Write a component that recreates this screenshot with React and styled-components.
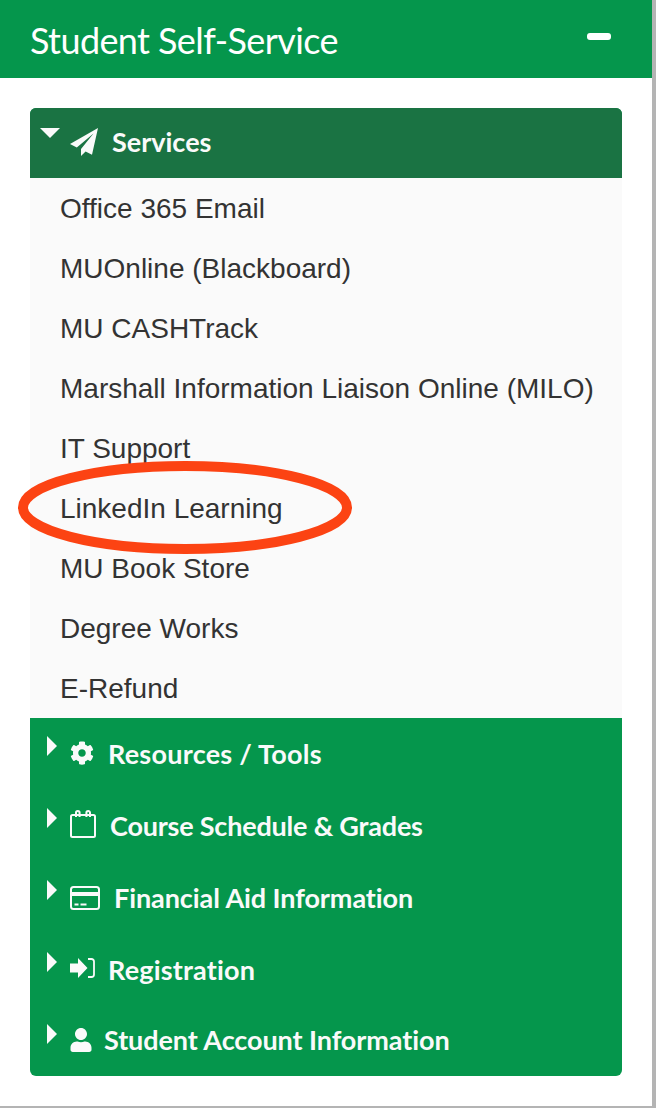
import React from "react";
import styled, { createGlobalStyle } from "styled-components";
import { FaCog, FaUser } from "react-icons/fa";

const Global = createGlobalStyle`
  html, body { margin: 0; padding: 0; background: #fff; }
  body { font-family: "Liberation Sans", Arial, sans-serif; }
`;

const Page = styled.div`
  width: 656px;
  height: 1108px;
  overflow: hidden;
  background: #b4b4b4;
`;

const Panel = styled.section`
  width: 652px;
  height: 1106px;
  background: #fff;
`;

const PanelHeader = styled.header`
  height: 78px;
  background: #05964c;
  display: flex;
  justify-content: space-between;
  padding: 0 41px 0 30px;
  box-sizing: border-box;
`;

const Title = styled.h1`
  margin: 0;
  font: 400 36px/81px Lato, sans-serif;
  letter-spacing: -0.6px;
  color: #fff;
`;

const Collapse = styled.span`
  width: 24px;
  height: 7px;
  margin-top: 33px;
  border-radius: 3px;
  background: #fff;
`;

const PanelBody = styled.div`
  padding: 30px 30px 0;
`;

const Card = styled.nav`
  position: relative;
  width: 592px;
  border-radius: 6px;
  background: #05964c;
`;

const Row = styled.div`
  display: flex;
  align-items: flex-start;
  height: ${(p) => p.$h}px;
  background: ${(p) => p.$bg || "transparent"};
  border-radius: ${(p) => (p.$head ? "6px 6px 0 0" : "0")};
  box-sizing: border-box;
  padding: ${(p) => p.$top}px 0 0 ${(p) => p.$left || 17}px;
  color: #fafafa;
`;

const Caret = styled.i`
  flex: none;
  width: 0;
  height: 0;
  border-style: solid;
  ${(p) =>
    p.$open
      ? `border-width: 10px 10px 0; border-color: #fafafa transparent transparent; margin: 3px 0 0 -7px;`
      : `border-width: 10px 0 10px 10px; border-color: transparent transparent transparent #fafafa;`}
`;

const IconSlot = styled.span`
  flex: none;
  display: flex;
  margin: ${(p) => p.$m};
  color: #fafafa;
`;

const Label = styled.span`
  font: 700 27px/36px Lato, sans-serif;
  letter-spacing: ${(p) => p.$ls || 0}px;
  white-space: nowrap;
  margin-left: ${(p) => p.$ml}px;
  transform: translateY(${(p) => p.$dy || 0}px);
`;

const Items = styled.ul`
  list-style: none;
  margin: 0;
  padding: 0;
  background: #fafafa;
`;

const Item = styled.li`
  height: 60px;
  padding-left: 30px;
  font-size: 28px;
  line-height: 61px;
  color: #333;
  white-space: nowrap;
`;

const Ring = styled.svg`
  position: absolute;
  left: -12px;
  top: 353px;
  width: 334px;
  height: 93px;
  pointer-events: none;
`;

const Plane = () => (
  <svg width="28" height="28" viewBox="0 0 28 28" fill="currentColor">
    <path d="M28 0 0 16l6.800 3.600L23.500 5.500 11 21v7l4.600-4.600 6.400 3.300z" />
  </svg>
);

const Calendar = () => (
  <svg width="26" height="28" viewBox="0 0 26 28" fill="none" stroke="currentColor" strokeWidth="2">
    <rect x="1" y="5" width="24" height="22" rx="1.5" />
    <path d="M6 7V2.800a1.800 1.800 0 0 1 3.600 0V7M16.400 7V2.800a1.800 1.800 0 0 1 3.600 0V7" />
  </svg>
);

const CreditCard = () => (
  <svg width="30" height="24" viewBox="0 0 30 24" fill="none">
    <rect x="1" y="1" width="28" height="22" rx="2.500" stroke="currentColor" strokeWidth="2" />
    <rect x="1" y="6" width="28" height="4" fill="currentColor" />
    <path d="M4.500 18.500h4M10.500 18.500h6" stroke="currentColor" strokeWidth="2" />
  </svg>
);

const SignIn = () => (
  <svg width="25" height="20" viewBox="0 0 25 20" fill="currentColor">
    <path d="M0 5.500h8V0l9.500 10L8 20v-5.500H0z" />
    <path d="M18 1h3.500A2.500 2.500 0 0 1 24 3.500v13a2.500 2.500 0 0 1-2.500 2.500H18" fill="none" stroke="currentColor" strokeWidth="1.800" />
  </svg>
);

const services = [
  "Office 365 Email",
  "MUOnline (Blackboard)",
  "MU CASHTrack",
  "Marshall Information Liaison Online (MILO)",
  "IT Support",
  "LinkedIn Learning",
  "MU Book Store",
  "Degree Works",
  "E-Refund",
];

const sections = [
  { label: "Resources / Tools", icon: <FaCog size={24} />, m: "5px 0 0 13px", ml: 14, h: 72, ls: 0.25 },
  { label: "Course Schedule & Grades", icon: <Calendar />, m: "2px 0 0 13px", ml: 14, h: 72, ls: -0.2 },
  { label: "Financial Aid Information", icon: <CreditCard />, m: "6px 0 0 13px", ml: 14, h: 72, ls: -0.08 },
  { label: "Registration", icon: <SignIn />, m: "6px 0 0 13px", ml: 13, h: 72, ls: 0.18 },
  { label: "Student Account Information", icon: <FaUser size={24} />, m: "4px 0 0 12px", ml: 11, h: 70, dy: -2, ls: -0.08 },
];

export default function App() {
  return (
    <Page>
      <Global />
      <Panel>
        <PanelHeader>
          <Title>Student Self-Service</Title>
          <Collapse />
        </PanelHeader>
        <PanelBody>
          <Card>
            <Row $head $h={70} $bg="#1a7343" $top={17} $left={17}>
              <Caret $open />
              <IconSlot $m="3px 0 0 10px">
                <Plane />
              </IconSlot>
              <Label $ml={14} $dy={-1}>Services</Label>
            </Row>
            <Items>
              {services.map((s) => (
                <Item key={s}>{s}</Item>
              ))}
            </Items>
            {sections.map((s) => (
              <Row key={s.label} $h={s.h} $top={18}>
                <Caret />
                <IconSlot $m={s.m}>{s.icon}</IconSlot>
                <Label $ml={s.ml} $dy={s.dy} $ls={s.ls}>{s.label}</Label>
              </Row>
            ))}
            <Ring viewBox="0 0 334 93">
              <ellipse cx="167" cy="46.500" rx="162" ry="41.500" fill="none" stroke="#fc4313" strokeWidth="10" />
            </Ring>
          </Card>
        </PanelBody>
      </Panel>
    </Page>
  );
}
